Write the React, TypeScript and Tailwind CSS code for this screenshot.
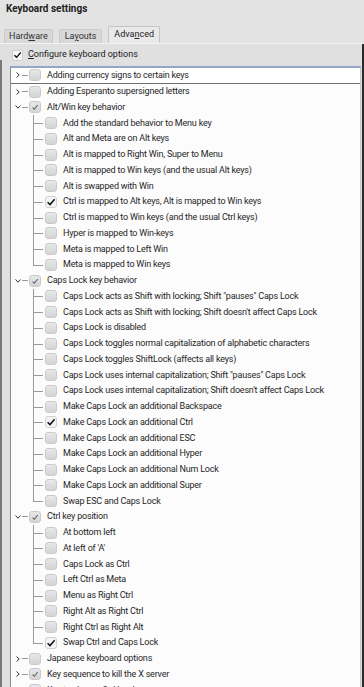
import React from "react";

type Child = { label: string; checked?: boolean };
type Top = { label: string; partial?: boolean; expanded?: boolean; children?: Child[] };

const c = (labels: string[], checked: string): Child[] =>
  labels.map((l) => ({ label: l, checked: l === checked }));

const data: Top[] = [
  { label: "Adding currency signs to certain keys" },
  { label: "Adding Esperanto supersigned letters" },
  {
    label: "Alt/Win key behavior",
    partial: true,
    expanded: true,
    children: c(
      [
        "Add the standard behavior to Menu key",
        "Alt and Meta are on Alt keys",
        "Alt is mapped to Right Win, Super to Menu",
        "Alt is mapped to Win keys (and the usual Alt keys)",
        "Alt is swapped with Win",
        "Ctrl is mapped to Alt keys, Alt is mapped to Win keys",
        "Ctrl is mapped to Win keys (and the usual Ctrl keys)",
        "Hyper is mapped to Win-keys",
        "Meta is mapped to Left Win",
        "Meta is mapped to Win keys",
      ],
      "Ctrl is mapped to Alt keys, Alt is mapped to Win keys"
    ),
  },
  {
    label: "Caps Lock key behavior",
    partial: true,
    expanded: true,
    children: c(
      [
        'Caps Lock acts as Shift with locking; Shift "pauses" Caps Lock',
        "Caps Lock acts as Shift with locking; Shift doesn't affect Caps Lock",
        "Caps Lock is disabled",
        "Caps Lock toggles normal capitalization of alphabetic characters",
        "Caps Lock toggles ShiftLock (affects all keys)",
        'Caps Lock uses internal capitalization; Shift "pauses" Caps Lock',
        "Caps Lock uses internal capitalization; Shift doesn't affect Caps Lock",
        "Make Caps Lock an additional Backspace",
        "Make Caps Lock an additional Ctrl",
        "Make Caps Lock an additional ESC",
        "Make Caps Lock an additional Hyper",
        "Make Caps Lock an additional Num Lock",
        "Make Caps Lock an additional Super",
        "Swap ESC and Caps Lock",
      ],
      "Make Caps Lock an additional Ctrl"
    ),
  },
  {
    label: "Ctrl key position",
    partial: true,
    expanded: true,
    children: c(
      [
        "At bottom left",
        "At left of 'A'",
        "Caps Lock as Ctrl",
        "Left Ctrl as Meta",
        "Menu as Right Ctrl",
        "Right Alt as Right Ctrl",
        "Right Ctrl as Right Alt",
        "Swap Ctrl and Caps Lock",
      ],
      "Swap Ctrl and Caps Lock"
    ),
  },
  { label: "Japanese keyboard options" },
  { label: "Key sequence to kill the X server", partial: true },
  { label: "Key to choose 3rd level" },
];

function Box({ state }: { state: "none" | "partial" | "checked" }) {
  return (
    <div
      className={
        "w-[12px] h-[12px] shrink-0 rounded-[3px] border flex items-center justify-center " +
        (state === "checked"
          ? "bg-[#f4f4f4] border-[#d0d0d0]"
          : "bg-gradient-to-b from-[#e8e8e8] to-[#d4d4d4] border-[#cacaca]")
      }
    >
      {state === "checked" && (
        <svg width="10" height="10" viewBox="0 0 10 10">
          <path d="M1.6 5.2 L4 7.6 L8.6 2.2" fill="none" stroke="#111" strokeWidth="1.5" />
        </svg>
      )}
      {state === "partial" && (
        <svg width="10" height="10" viewBox="0 0 10 10">
          <path d="M2.6 5.6 L4.3 7.2 L7.8 3" fill="none" stroke="#666" strokeWidth="1.1" />
        </svg>
      )}
    </div>
  );
}

function Arrow({ open }: { open: boolean }) {
  return (
    <svg width="6" height="6" viewBox="0 0 6 6">
      {open ? (
        <path d="M0.5 1.5 L3 4.2 L5.5 1.5" fill="none" stroke="#333" strokeWidth="1" />
      ) : (
        <path d="M1.5 0.5 L4.2 3 L1.5 5.5" fill="none" stroke="#333" strokeWidth="1" />
      )}
    </svg>
  );
}

const label = "text-[9px] tracking-[-0.2px] text-[#262626] whitespace-nowrap leading-none";

function TopRow({ item, first }: { item: Top; first?: boolean }) {
  return (
    <div
      className={
        "relative h-[15.75px] shrink-0 flex items-center " +
        (first ? "bg-white border-b border-[#6f6f6f]" : "")
      }
    >
      <div className="w-[4px]" />
      <div className="w-[6px] flex items-center justify-center">
        <Arrow open={!!item.expanded} />
      </div>
      <div className="w-[8px] flex items-center justify-center">
        <div className="w-[6px] border-t border-dashed border-[#999]" />
      </div>
      <Box state={item.partial ? "partial" : "none"} />
      <div className="w-[6px]" />
      <span className={label}>{item.label}</span>
    </div>
  );
}

function ChildRow({ item, last }: { item: Child; last: boolean }) {
  return (
    <div className="relative h-[15.75px] shrink-0 flex items-center">
      <div className="relative w-[34px] self-stretch">
        <div
          className={
            "absolute left-[22px] top-0 w-px bg-[#9a9a9a] " + (last ? "h-1/2" : "h-full")
          }
        />
        <div className="absolute left-[22px] top-1/2 w-[10px] h-px bg-[#9a9a9a]" />
      </div>
      <Box state={item.checked ? "checked" : "none"} />
      <div className="w-[6px]" />
      <span className={label}>{item.label}</span>
    </div>
  );
}

export default function App() {
  return (
    <div
      className="relative w-[364px] h-[687px] overflow-hidden bg-[#e3e3e3] flex flex-col"
      style={{ fontFamily: "Roboto, 'Noto Sans', sans-serif" }}
    >
      <div className="h-[17px] shrink-0 flex items-center pl-[6px]">
        <span className="text-[10px] font-bold text-[#222] leading-none">Keyboard settings</span>
      </div>
      <div className="h-[27px] shrink-0 flex items-end pl-[4px] gap-[6px] border-b border-[#f3f3f3]">
        <div className="h-[14px] px-[4px] flex items-center bg-[#d8d8d8] border border-b-0 border-[#cacaca] rounded-t-[2px] text-[9px] text-[#333]">
          <span>
            Hard<span className="underline">w</span>are
          </span>
        </div>
        <div className="h-[14px] px-[5px] flex items-center bg-[#d8d8d8] border border-b-0 border-[#cacaca] rounded-t-[2px] text-[9px] text-[#333]">
          <span>
            La<span className="underline">y</span>outs
          </span>
        </div>
        <div className="h-[17px] px-[5px] flex items-center bg-[#e9e9e9] border border-b-0 border-[#c6c6c6] rounded-t-[2px] text-[9px] text-[#222]">
          <span>
            Adva<span className="underline">n</span>ced
          </span>
        </div>
      </div>
      <div className="flex-1 min-h-0 flex flex-col bg-[#e0e0e0]">
        <div className="h-[22px] shrink-0 flex items-center pl-[12px] gap-[5px]">
          <div className="w-[11px] h-[11px] rounded-[2px] bg-[#f7f7f7] border border-[#cfcfcf] flex items-center justify-center">
            <svg width="10" height="10" viewBox="0 0 10 10">
              <path d="M1.6 5.2 L4 7.6 L8.6 2.2" fill="none" stroke="#111" strokeWidth="1.5" />
            </svg>
          </div>
          <span className="text-[9px] text-[#222]">
            <span className="underline">C</span>onfigure keyboard options
          </span>
        </div>
        <div className="ml-[10px] mr-[3px] flex-1 min-h-0 overflow-hidden flex flex-col bg-[#fcfcfc] border-l border-[#8a8a8a] border-t-2 border-t-[#93a5c9] border-r border-r-[#c8c8c8]">
          {data.map((t, i) => (
            <React.Fragment key={t.label}>
              <TopRow item={t} first={i === 0} />
              {t.expanded &&
                t.children?.map((ch, j) => (
                  <ChildRow key={ch.label} item={ch} last={j === t.children!.length - 1} />
                ))}
            </React.Fragment>
          ))}
        </div>
      </div>
      <div className="absolute right-0 top-[44px] bottom-0 w-[2px] bg-[#2a2a2a]" />
      <div className="absolute left-0 top-[60px] bottom-0 w-[2px] bg-[#7a7a7a]" />
    </div>
  );
}
